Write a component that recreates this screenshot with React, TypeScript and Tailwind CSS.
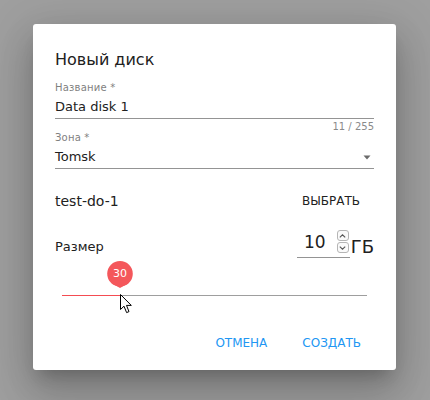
import React from 'react';

const font = { fontFamily: '"DejaVu Sans", Verdana, sans-serif' };

function SizeSpinner() {
    return (
        <div className="flex flex-col gap-[1px] mb-[1px]">
            <div className="w-[12px] h-[11px] rounded-[3px] border border-[#b5b5b5] bg-[#fafafa] flex items-center justify-center">
                <svg width="7" height="4" viewBox="0 0 7 4">
                    <path d="M0.8 3.4 L3.5 0.8 L6.2 3.4" fill="none" stroke="#555" strokeWidth="1.1" />
                </svg>
            </div>
            <div className="w-[12px] h-[11px] rounded-[3px] border border-[#b5b5b5] bg-[#fafafa] flex items-center justify-center">
                <svg width="7" height="4" viewBox="0 0 7 4">
                    <path d="M0.8 0.6 L3.5 3.2 L6.2 0.6" fill="none" stroke="#555" strokeWidth="1.1" />
                </svg>
            </div>
        </div>
    );
}

export default function App() {
    const value = 30;
    const filled = 58;

    return (
        <div className="w-[430px] h-[400px] bg-[#9f9f9f] pt-[24px] pl-[33px] overflow-hidden" style={font}>
            <div className="w-[363px] h-[346px] bg-white rounded-[3px] px-[22px] pt-6 flex flex-col shadow-[0_11px_15px_-7px_rgba(0,0,0,0.2),0_24px_38px_3px_rgba(0,0,0,0.14),0_9px_46px_8px_rgba(0,0,0,0.12)]">
                {/* Title */}
                <h2 className="text-[16px] leading-6 text-[#212121]">Новый диск</h2>

                {/* Name */}
                <div className="mt-[10px]">
                    <div className="text-[10px] leading-[12px] tracking-[0.2px] text-[#7f7f7f]">Название *</div>
                    <div className="mt-[5px] text-[13px] leading-4 text-[#212121] pb-[3px] border-b border-[#949494]">Data disk 1</div>
                    <div className="mt-[3px] text-right text-[10px] leading-[10px] text-[#8a8a8a]">11 / 255</div>
                </div>

                {/* Zone */}
                <div>
                    <div className="text-[10px] leading-[12px] tracking-[0.2px] text-[#7f7f7f]">Зона *</div>
                    <div className="mt-[5px] flex items-center justify-between pb-[3px] border-b border-[#949494]">
                        <span className="text-[13px] leading-4 text-[#212121]">Tomsk</span>
                        <svg width="10" height="5" viewBox="0 0 10 5" className="mr-[2px]">
                            <path d="M1.5 0.5 H8.5 L5 4.5 Z" fill="#6b6b6b" />
                        </svg>
                    </div>
                </div>

                {/* Host */}
                <div className="mt-[22px] flex items-center justify-between leading-5">
                    <span className="text-[14px] text-[#212121]">test-do-1</span>
                    <button className="text-[12px] text-[#212121] pr-[14px]">ВЫБРАТЬ</button>
                </div>

                {/* Size */}
                <div className="mt-[19px] flex items-end justify-between">
                    <span className="text-[13px] leading-4 text-[#212121] mb-[3.5px]">Размер</span>
                    <div className="flex items-end">
                        <div className="w-[53px] flex items-center justify-end gap-[11px] pr-[1px] pb-[3px] border-b border-[#949494]">
                            <span className="text-[17px] leading-[22px] text-[#212121]">10</span>
                            <SizeSpinner />
                        </div>
                        <span className="ml-[1px] text-[18px] leading-[22px] text-[#212121] mb-[0.5px]">ГБ</span>
                    </div>
                </div>

                {/* Slider */}
                <div className="relative mx-[7px] pt-[37px]">
                    <div className="flex h-px">
                        <div className="h-px bg-[#f44c52]" style={{ width: filled }} />
                        <div className="h-px flex-1 bg-[#9e9e9e]" />
                    </div>
                    <div className="absolute top-[3px] w-[26px] h-[28px]" style={{ left: filled - 13 }}>
                        <svg width="26" height="28" viewBox="0 0 26 28" className="absolute inset-0">
                            <circle cx="13" cy="12.8" r="12.8" fill="#f4575b" />
                            <path d="M3.8 21.8 L13 27 L22.2 21.8 Z" fill="#f4575b" />
                        </svg>
                        <span className="absolute left-0 top-[6px] w-[26px] text-center text-[11px] leading-[13px] text-white">{value}</span>
                    </div>
                    <svg width="13" height="20" viewBox="0 0 13 20" className="absolute top-[36px]" style={{ left: filled - 0.5 }}>
                        <path d="M0.5 0.5 L0.5 15.5 L4 12.2 L6.6 18.6 L9 17.6 L6.5 11.4 L11.3 11.4 Z" fill="#fff" stroke="#000" strokeWidth="1" strokeLinejoin="round" />
                    </svg>
                </div>

                {/* Actions */}
                <div className="mt-[39px] flex justify-end gap-[35px] pr-[13px] text-[12px] leading-4 text-[#2196f3]">
                    <button>ОТМЕНА</button>
                    <button>СОЗДАТЬ</button>
                </div>
            </div>
        </div>
    );
}
